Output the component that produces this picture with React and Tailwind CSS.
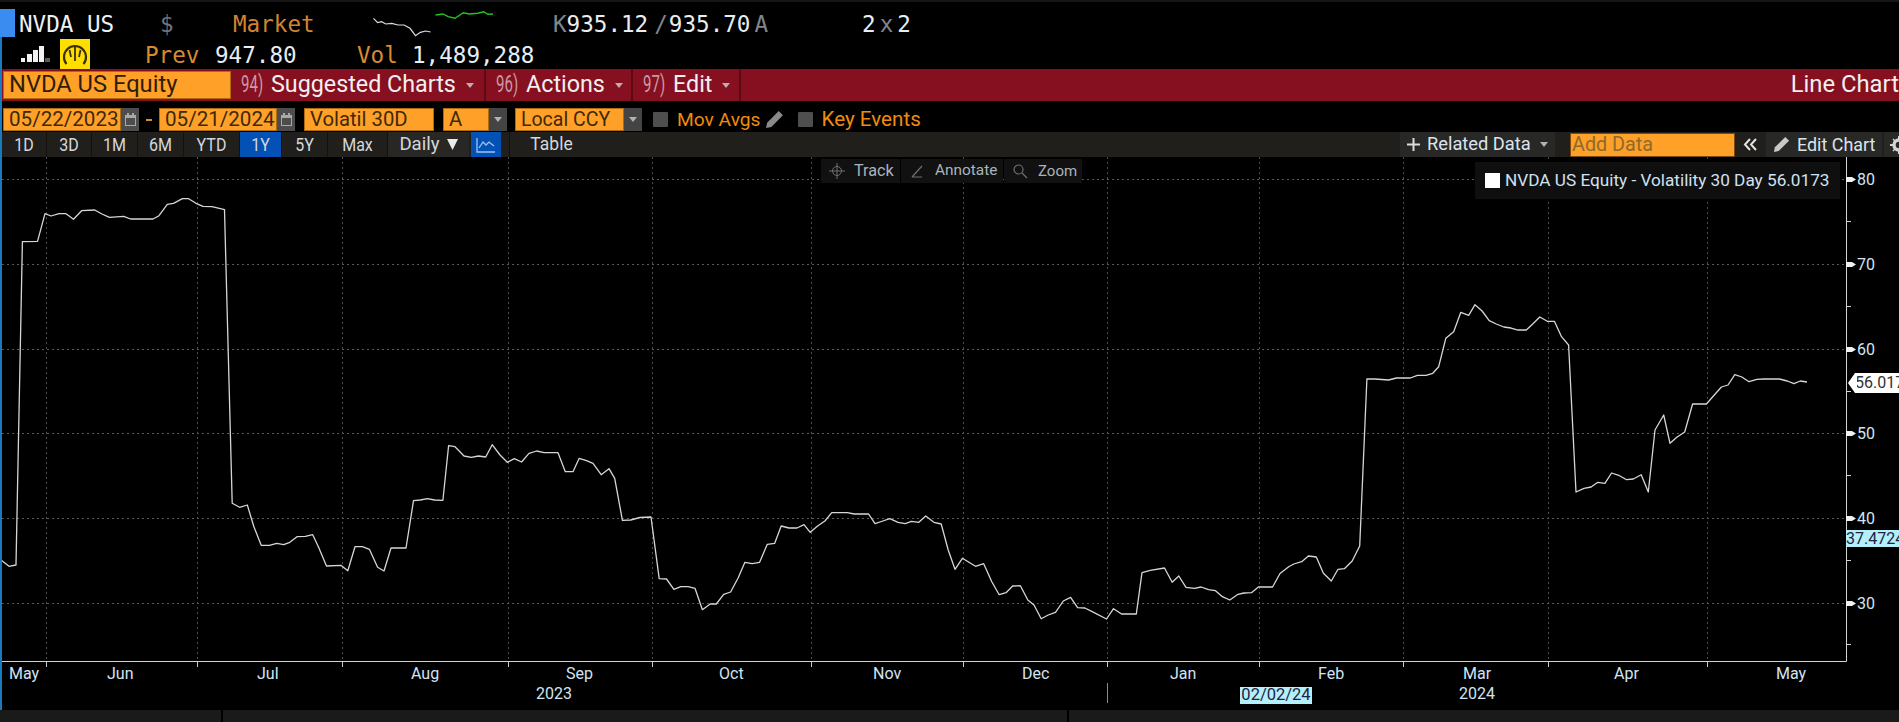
import React from 'react';

const LINE = [[1,560],[9,566.3],[16,565],[22.4,241.7],[37.5,241.3],[45,213.7],[51,216],[59,213.7],[66,213.7],[73.5,219.3],[81.6,210.7],[94.7,210],[102,214],[109.4,217.3],[123.7,216.3],[130.6,219],[153,219],[159,215.7],[167.3,204.3],[173.5,203.3],[182.4,198.7],[188.6,198.7],[196,203.3],[203,206.3],[212,206.7],[224.5,209.7],[232.2,503.3],[239.6,507.3],[247.3,505],[253.9,526.7],[261.2,545.3],[269.4,545.3],[276.7,543.3],[283.7,544.7],[289.8,542.3],[297,536.7],[305.3,536.3],[312.7,534.7],[318.4,546.7],[326.5,566],[340.8,565.3],[347.8,570.7],[355,546.7],[362.4,546.7],[369.4,549.3],[377.6,567.3],[384,571],[391,548],[406,548],[413.5,500.7],[420.4,500],[427.3,498.7],[434.7,500],[442.9,500.3],[448.6,445.7],[455,446.7],[464,456],[471.4,457.3],[478.4,456],[485.7,457],[492.2,444.7],[500,455],[507.3,462.3],[514.3,458.7],[521.6,462],[529,453.3],[536.7,451],[544,452.7],[558,452.7],[565.3,471.7],[573,471.7],[579.2,458.3],[586.5,460.7],[593,463.3],[601.2,474.7],[609,468.7],[614.7,478.3],[622.4,520.3],[630.6,520],[640,517.5],[651,517],[659.2,578.7],[666.5,579],[673.9,589.3],[680.8,586.7],[688.2,586.7],[695,588.3],[702.4,609.7],[710.2,604],[716.3,604],[723.7,594.3],[730.6,592],[738,578.3],[744.9,562.3],[752.2,563.7],[759.6,562.3],[767.3,544.3],[774.7,543.3],[781.2,526],[789,528],[797,528],[804,524.7],[810.2,532.3],[817.6,526],[824.9,521],[831.8,512.7],[847.3,512.7],[854.3,514],[868.6,514],[875,523.7],[882.9,521],[889.8,518.7],[898,522.3],[905.3,523.7],[911.4,521.3],[918.8,522.3],[925.7,516],[933.9,522.3],[941.2,524],[948.2,550],[955,569.3],[962.4,558.3],[975.5,566.3],[983.7,563.7],[991.8,581.7],[999.2,594.7],[1006,592.7],[1012.7,586],[1020.4,585.7],[1027.8,600],[1034,605],[1041.2,618.7],[1048.2,615],[1055.5,612.3],[1063.3,601],[1070.6,597.3],[1077.6,607.7],[1084.9,608],[1092.2,611.7],[1106.5,619],[1113.5,608.7],[1121.6,614],[1136.3,614],[1142,572.7],[1150.2,570.3],[1164.5,568],[1172.2,582.3],[1178.8,576],[1186,587.3],[1194.3,588.3],[1201.2,587],[1208.6,589.7],[1215.5,590.7],[1222.4,596.7],[1229.8,600],[1238,594.3],[1244,593],[1251.4,592.7],[1258.4,587],[1272.6,587],[1280,573.5],[1288.7,566.7],[1293.8,564],[1301.7,561.7],[1308.4,556],[1316.3,557],[1323.4,573.3],[1331.3,581],[1338,569.3],[1344.4,568.7],[1352.2,561],[1359.7,546],[1366.9,379],[1374.7,379],[1388.6,380],[1396.5,378],[1410.3,378],[1417.4,375.3],[1426,375.3],[1432.8,373.3],[1438.7,366.7],[1445.8,338.3],[1453.7,331.7],[1460.8,312.3],[1468.7,315.3],[1475,304.7],[1482.1,311],[1489.2,320.7],[1496.3,324],[1503.8,327],[1511,328],[1518,330],[1526.3,330],[1532.7,324],[1539.8,317],[1547.3,321.3],[1554.4,321.3],[1561.5,336.7],[1568.6,345],[1576,492],[1584,488.3],[1591.1,487],[1597.8,482.3],[1604.9,483.3],[1611.6,473],[1619.5,475.7],[1626.6,479.7],[1633.3,479],[1641.2,474.7],[1648.3,492],[1655,430],[1663.7,415],[1670,443.3],[1676.8,437.3],[1684.7,432],[1692.6,404],[1706.4,404],[1714.3,395],[1721.4,387],[1728,385],[1734.8,374.7],[1741.9,377],[1749,381.7],[1756.9,379.3],[1763.6,379],[1779.4,379],[1787.3,381],[1794,383.7],[1800.3,381],[1807,382]];

const CHART_TOP = 157;
const GRID_Y = [179, 264, 349, 433, 518, 603];
const GRID_X = [46, 197, 342, 508, 652, 811, 963, 1107, 1259, 1403, 1548, 1707];
const MINOR_Y = [221, 306, 391, 475, 560, 644];
const Y_LABELS = [['80', 179], ['70', 264], ['60', 349], ['50', 433], ['40', 518], ['30', 603]];
const MONTHS = [['May', 9], ['Jun', 107], ['Jul', 257], ['Aug', 411], ['Sep', 566], ['Oct', 719], ['Nov', 873], ['Dec', 1022], ['Jan', 1170], ['Feb', 1318], ['Mar', 1463], ['Apr', 1614], ['May', 1776]];

// fixed pitch quote lines at the top
const Quote = ({ className = '', children }) => (
  <span className={`mb-[2px] shrink-0 whitespace-pre font-['DejaVu_Sans_Mono',monospace] text-[22.6px] leading-[24px] ${className}`}>{children}</span>
);

const Label = ({ className = '', children }) => (
  <span className={`inline-block whitespace-pre leading-none ${className}`}>{children}</span>
);

const Caret = ({ className = '' }) => (
  <svg width="8" height="5" viewBox="0 0 8 5" className={className}><path d="M0 0h8L4 5z" fill="#b9aeb0" /></svg>
);

const MenuItem = ({ n, label, width }) => (
  <div className={`flex h-full items-center border-r-2 border-[#5c0a16] pl-[10px] ${width}`}>
    <span className="w-[30px] shrink-0">
      <Label className="origin-left scale-y-[1.55] text-[15px] text-[#c99aa5]">{n})</Label>
    </span>
    <Label className="text-[23.3px] text-[#f4eef0]">{label}</Label>
    <Caret className="ml-[10px]" />
  </div>
);

const OrangeField = ({ width, size, children }) => (
  <div className={`flex h-[23px] items-center overflow-hidden border border-[#b06a10] bg-[#ffa028] pl-[5px] ${width}`}>
    <Label className={`text-[#3f2808] ${size}`}>{children}</Label>
  </div>
);

const CalendarBtn = () => (
  <div className="flex h-[23px] w-[18px] items-center justify-center bg-[#4d4d4d]">
    <svg width="11" height="13" viewBox="0 0 11 13">
      <path d="M0 2h11v11H0z" fill="#a9a9a9" />
      <path d="M1 5h9v7H1z" fill="#4d4d4d" />
      <path d="M2 0h2v3H2zM7 0h2v3H7z" fill="#a9a9a9" />
    </svg>
  </div>
);

const DropBtn = () => (
  <div className="flex h-[23px] w-[18px] items-center justify-center bg-[#444]">
    <Caret />
  </div>
);

const CheckItem = ({ label, size }) => (
  <div className="flex h-[23px] items-center">
    <span className="h-[15px] w-[15px] rounded-[1px] bg-[#4e4e4e]" />
    <Label className={`ml-[9px] text-[#f18b0c] ${size}`}>{label}</Label>
  </div>
);

const Pencil = ({ size = 18, color = '#c9c9c9' }) => (
  <svg width={size} height={size} viewBox="0 0 18 18"><path d="M13 1l4 4L6 16l-5 1 1-5z" fill={color} /></svg>
);

const Tab = ({ label, width, active }) => (
  <div className={`flex h-full items-center justify-center border-r border-[#111] ${width} ${active ? 'bg-[#0451b5]' : ''}`}>
    <Label className="scale-y-[1.15] text-[16px] text-[#d4d8dc]">{label}</Label>
  </div>
);

const Header = () => (
  <div className="h-[69px] border-t-2 border-[#161616]">
    <div className="flex h-[36px] items-end">
      <div className="mb-[1px] h-[28px] w-[15px] shrink-0 bg-[#3b8cf0]" />
      <Quote className="ml-[4px] w-[141px] text-[#eef2f6]">NVDA US</Quote>
      <Quote className="w-[73px] text-[#6f7478]">$</Quote>
      <Quote className="w-[140px] text-[#cf8530]">Market</Quote>
      <svg width="122" height="36" viewBox="0 0 122 36" className="shrink-0">
        <path d="M.5 16.300L4.600 20.700 8.600 19.700 12.700 22 18.800 21.300 25 23 31 23 37 26.300 42.500 33.700 47.400 30.300 52.700 29 57.600 30" fill="none" stroke="#dcdcdc" strokeWidth="1.200" />
        <path d="M62.500 13L69.900 12 75.200 14.700 82 16.300 90.300 10.700 96.400 12 104.600 11.300 110.700 9.700 114.800 12.300 120 12" fill="none" stroke="#1fc71f" strokeWidth="1.400" />
      </svg>
      <Quote className="ml-[58px] text-[#80868c]">K</Quote>
      <Quote className="text-[#e6edf3]">935.12</Quote>
      <Quote className="ml-[6px] text-[#80868c]">/</Quote>
      <Quote className="ml-[1px] text-[#e6edf3]">935.70</Quote>
      <Quote className="ml-[4px] text-[#80868c]">A</Quote>
      <Quote className="ml-[94px] text-[#e6edf3]">2</Quote>
      <Quote className="ml-[4px] text-[#80868c]">x</Quote>
      <Quote className="ml-[4px] text-[#e6edf3]">2</Quote>
    </div>
    <div className="flex h-[31px] items-end">
      <svg width="30" height="16" viewBox="0 0 30 16" className="mb-[7px] ml-[21px] shrink-0">
        <path d="M0 12h4v4H0zM6 8h5v8H6zM12 4h5v12h-5zM18 0h5v16h-5z" fill="#f2f2f2" />
        <path d="M24 12h5v4h-5z" fill="#5a5a5a" />
      </svg>
      <div className="ml-[9px] flex h-[30px] w-[30px] shrink-0 items-center justify-center self-center bg-[#ffdf00]">
        <svg width="26" height="26" viewBox="0 0 26 26" fill="none" stroke="#3a3008" strokeWidth="2.200">
          <path d="M4.500 23 A11 11 0 1 1 21.500 23" />
          <path d="M13 5v15M7.500 9l1.500 7M18.500 9l-1.500 7" strokeWidth="1.800" />
        </svg>
      </div>
      <Quote className="ml-[55px] w-[70px] text-[#d98a30]">Prev</Quote>
      <Quote className="w-[142px] text-[#e6edf3]">947.80</Quote>
      <Quote className="w-[55px] text-[#d98a30]">Vol</Quote>
      <Quote className="text-[#e6edf3]">1,489,288</Quote>
    </div>
  </div>
);

const MenuBar = () => (
  <div className="flex h-[32px] items-center bg-[#86101f]">
    <div className="ml-[3px] flex h-[28px] w-[228px] shrink-0 items-center border border-[#b06a10] bg-[#ffa028] pl-[5px]">
      <Label className="text-[23.7px] text-[#2e1d06]">NVDA US Equity</Label>
    </div>
    <MenuItem n="94" label="Suggested Charts" width="w-[255px]" />
    <MenuItem n="96" label="Actions" width="w-[147px]" />
    <MenuItem n="97" label="Edit" width="w-[108px]" />
    <Label className="ml-auto text-[23.8px] text-[#f4eef0]">Line Chart</Label>
  </div>
);

const Params = () => (
  <div className="flex h-[31px] items-end pb-[1px] pl-[3px]">
    <OrangeField width="w-[118px]" size="text-[20.6px]">05/22/2023</OrangeField>
    <CalendarBtn />
    <div className="flex h-[23px] items-center px-[7px]"><span className="h-[2px] w-[6px] bg-[#d98a30]" /></div>
    <OrangeField width="w-[118px]" size="text-[20.6px]">05/21/2024</OrangeField>
    <CalendarBtn />
    <div className="w-[9px]" />
    <OrangeField width="w-[130px]" size="text-[20.3px]">Volatil 30D</OrangeField>
    <div className="w-[9px]" />
    <OrangeField width="w-[46px]" size="text-[20.3px]">A</OrangeField>
    <DropBtn />
    <div className="w-[8px]" />
    <OrangeField width="w-[109px]" size="text-[19.5px]">Local CCY</OrangeField>
    <DropBtn />
    <div className="ml-[11px] flex h-[23px] items-center">
      <CheckItem label="Mov Avgs" size="text-[19.2px]" />
      <span className="ml-[4px]"><Pencil size={19} color="#8a8a8a" /></span>
    </div>
    <div className="ml-[14px]"><CheckItem label="Key Events" size="text-[20.6px]" /></div>
  </div>
);

const Toolbar = () => (
  <div className="flex h-[25px] items-center bg-[#201f1b] pl-[2px]">
    <Tab label="1D" width="w-[45px]" />
    <Tab label="3D" width="w-[45px]" />
    <Tab label="1M" width="w-[46px]" />
    <Tab label="6M" width="w-[46px]" />
    <Tab label="YTD" width="w-[56px]" />
    <Tab label="1Y" width="w-[42px]" active />
    <Tab label="5Y" width="w-[46px]" />
    <Tab label="Max" width="w-[60px]" />
    <div className="flex h-full w-[81px] items-center justify-center bg-[#282724]">
      <Label className="text-[18.6px] text-[#d4d8dc]">Daily</Label>
      <svg width="11" height="11" viewBox="0 0 11 11" className="ml-[7px]"><path d="M0 0h11L5.500 11z" fill="#e8ecef" /></svg>
    </div>
    <div className="ml-[2px] flex h-full w-[30px] items-center justify-center bg-[#0451b5]">
      <svg width="20" height="16" viewBox="0 0 20 16" fill="none" stroke="#9cc4f0" strokeWidth="1.300">
        <path d="M1 1v14h18" />
        <path d="M3 11l4-6 3 3 3-3 5 4" />
      </svg>
    </div>
    <div className="ml-[8px] flex h-full w-[84px] items-center justify-center border-l border-[#111] bg-[#201f1b]">
      <Label className="text-[17.5px] text-[#d4d8dc]">Table</Label>
    </div>
    <div className="ml-auto flex h-full items-center">
      <div className="flex h-full w-[155px] items-center bg-[#282826] pl-[7px]">
        <svg width="13" height="13" viewBox="0 0 13 13"><path d="M5.500 0h2v5.500H13v2H7.500V13h-2V7.500H0v-2h5.500z" fill="#d9dde0" /></svg>
        <Label className="ml-[7px] text-[18.3px] text-[#dbe4ec]">Related Data</Label>
        <Caret className="ml-[9px]" />
      </div>
      <div className="ml-[15px] flex h-[24px] w-[165px] items-center border border-[#7a4a0c] bg-[#ffa028] pl-[1px]">
        <Label className="text-[19.8px] text-[#8f6a2c]">Add Data</Label>
      </div>
      <div className="flex h-full w-[31px] items-center justify-center">
        <svg width="15" height="13" viewBox="0 0 15 13" fill="none" stroke="#e2e2e2" strokeWidth="2"><path d="M7 1L2 6.500 7 12M13 1L8 6.500 13 12" /></svg>
      </div>
      <div className="flex h-full w-[116px] items-center bg-[#282826] pl-[7px]">
        <Pencil size={17} />
        <Label className="ml-[7px] text-[17.9px] text-[#dbe4ec]">Edit Chart</Label>
      </div>
      <div className="ml-[2px] flex h-full w-[15px] items-center overflow-hidden bg-[#282826] pl-[6px]">
        <svg width="18" height="18" viewBox="0 0 18 18" className="shrink-0">
          <circle cx="9" cy="9" r="5" fill="none" stroke="#d4d4d4" strokeWidth="3.400" />
          <path d="M8 0h2v4H8zM8 14h2v4H8zM0 8h4v2H0zM14 8h4v2h-4zM2.500 3.500l1-1 3 3-1 1zM11.500 12.500l1-1 3 3-1 1zM14.500 2.500l1 1-3 3-1-1zM5.500 11.500l1 1-3 3-1-1z" fill="#d4d4d4" />
        </svg>
      </div>
    </div>
  </div>
);

const AxisText = ({ x, y, children }) => (
  <div className="absolute -translate-y-1/2" style={{ left: x, top: y - CHART_TOP }}>
    <Label className="text-[16px] text-[#d2e4f2]">{children}</Label>
  </div>
);

const Chart = () => (
  <div className="relative h-[553px] overflow-hidden">
    <svg width="1899" height="553" viewBox={`0 ${CHART_TOP} 1899 553`} className="absolute left-0 top-0">
      {GRID_Y.map((y) => (
        <path key={y} d={`M2 ${y + 0.5}H1846`} stroke="#5a5a5a" strokeDasharray="2 3" />
      ))}
      {GRID_X.map((x) => (
        <g key={x}>
          <path d={`M${x + 0.5} 157V661`} stroke="#4e4e4e" strokeDasharray="2 3" />
          <path d={`M${x + 0.5} 661V667`} stroke="#c8c8c8" />
        </g>
      ))}
      <path d="M2 661.500H1846.500V157" fill="none" stroke="#d2d2d2" />
      {MINOR_Y.map((y) => (
        <path key={y} d={`M1846 ${y + 0.5}h5`} stroke="#d2d2d2" />
      ))}
      {GRID_Y.map((y) => (
        <path key={y} d={`M1846 ${y - 2}h6l4 2.500-4 2.500h-6z`} fill="#f0f0f0" />
      ))}
      <path d="M1107.500 683V703" stroke="#8a8a8a" />
      <polyline points={LINE.map((p) => p.join(',')).join(' ')} fill="none" stroke="#d6d6d6" strokeWidth="1.300" strokeLinejoin="round" />
    </svg>

    {/* hover tools */}
    <div className="absolute left-[821px] top-[2px] flex h-[24px] text-[#a9b4bd]">
      <div className="flex w-[79px] items-center bg-[#111] pl-[8px]">
        <svg width="16" height="16" viewBox="0 0 16 16" fill="none" stroke="#6f6f6f"><circle cx="8" cy="8" r="4.500" /><path d="M8 0v16M0 8h16" /></svg>
        <Label className="ml-[9px] text-[16.2px]">Track</Label>
      </div>
      <div className="ml-[1px] flex w-[102px] items-center bg-[#111] pl-[10px]">
        <svg width="13" height="13" viewBox="0 0 13 13" fill="none" stroke="#6f6f6f" strokeWidth="1.200"><path d="M1 12L11 1M1 12h10" /></svg>
        <Label className="ml-[11px] text-[15.4px]">Annotate</Label>
      </div>
      <div className="ml-[1px] flex w-[78px] items-center bg-[#111] pl-[9px]">
        <svg width="15" height="15" viewBox="0 0 15 15" fill="none" stroke="#6f6f6f" strokeWidth="1.200"><circle cx="5.500" cy="5.500" r="4.500" /><path d="M9 9l5 5" /></svg>
        <Label className="ml-[10px] text-[15px]">Zoom</Label>
      </div>
    </div>

    {/* legend */}
    <div className="absolute left-[1475px] top-[5px] flex h-[37px] w-[365px] items-center bg-[#0f0f0f] pl-[10px]">
      <span className="h-[15px] w-[15px] bg-white" />
      <Label className="ml-[5px] text-[17.2px] text-[#cfe2f0]">NVDA US Equity - Volatility 30 Day 56.0173</Label>
    </div>

    {Y_LABELS.map(([label, y]) => (
      <AxisText key={label} x={1857} y={y + 1}>{label}</AxisText>
    ))}
    {MONTHS.map(([label, x]) => (
      <AxisText key={x} x={x} y={674}>{label}</AxisText>
    ))}
    <AxisText x={536} y={694}>2023</AxisText>
    <AxisText x={1459} y={694}>2024</AxisText>

    {/* value tags */}
    <div className="absolute left-[1855px] top-[216px] flex h-[20px] w-[44px] items-center overflow-hidden bg-white">
      <Label className="text-[16px] text-[#333]">56.0173</Label>
    </div>
    <svg width="9" height="20" viewBox="0 0 9 20" className="absolute left-[1848px] top-[216px]"><path d="M9 0v20H7L0 10 7 0z" fill="#fff" /></svg>
    <div className="absolute left-[1846px] top-[373px] flex h-[17px] w-[53px] items-center overflow-hidden bg-[#b4f0fa]">
      <Label className="text-[16px] text-[#224]">37.4724</Label>
    </div>
    <div className="absolute left-[1240px] top-[530px] flex h-[17px] w-[72px] items-center justify-center bg-[#b4f0fa]">
      <Label className="text-[16.5px] text-[#224]">02/02/24</Label>
    </div>
  </div>
);

export default function App() {
  return (
    <div className="relative h-[722px] w-[1899px] overflow-hidden bg-black font-['Roboto',sans-serif]">
      <Header />
      <MenuBar />
      <Params />
      <Toolbar />
      <Chart />
      <div className="flex h-[12px] bg-[#1a1a1a]">
        <div className="w-[223px] border-r-2 border-black" />
        <div className="w-[846px] border-r-2 border-black" />
      </div>
      <div className="absolute bottom-[12px] left-0 top-[37px] w-[1.5px] bg-[#1a7ac0]" />
    </div>
  );
}
